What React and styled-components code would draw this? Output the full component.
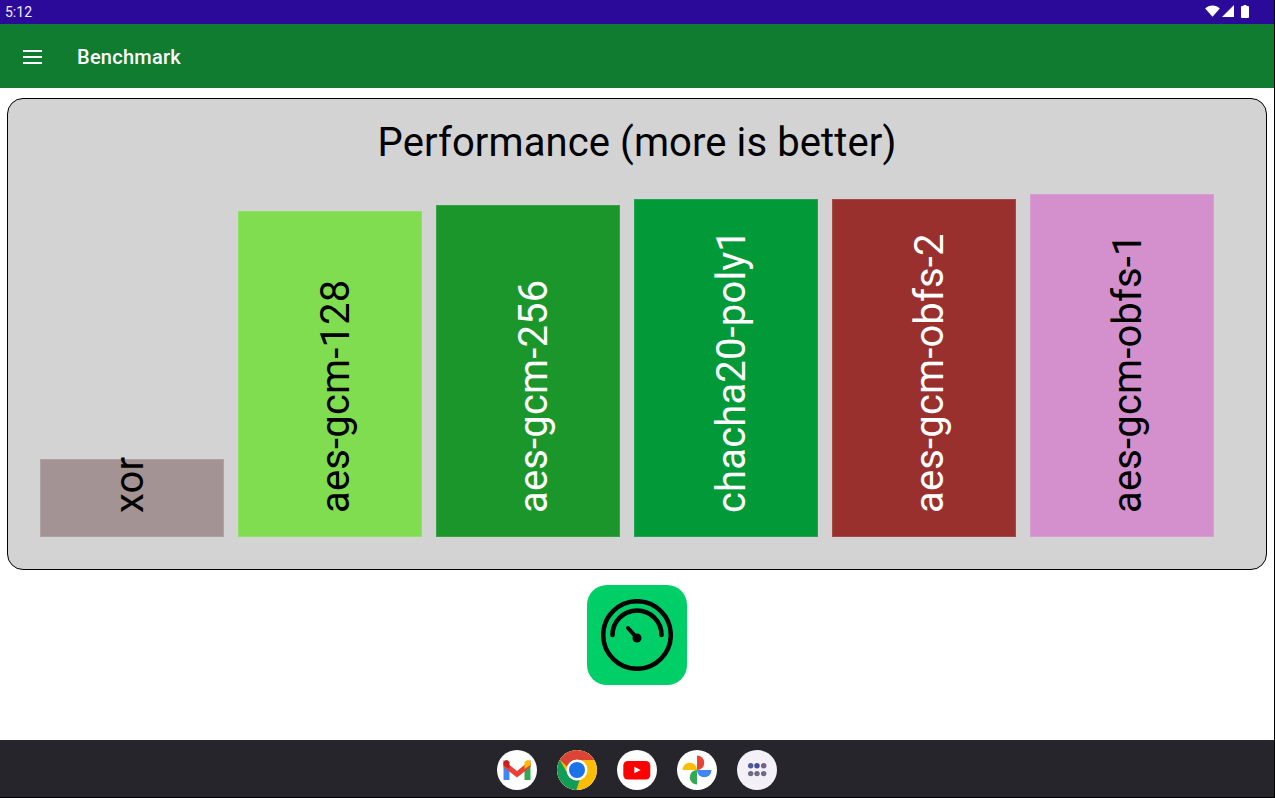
import React from "react";
import styled, { createGlobalStyle } from "styled-components";

const Global = createGlobalStyle`
  html, body { margin: 0; padding: 0; background: #000; height: 100%; overflow: hidden; }
  body { font-family: Roboto, "Liberation Sans", sans-serif; }
`;

const Screen = styled.div`
  width: 1274px;
  height: 797px;
  display: flex;
  flex-direction: column;
  background: #fff;
  overflow: hidden;
`;
const StatusBar = styled.div`
  height: 24px;
  flex: none;
  background: #2b0a9a;
  color: #f1eefb;
  display: flex;
  align-items: center;
  justify-content: space-between;
  padding: 0 25px 0 5px;
  font-size: 14px;
  line-height: 24px;
`;
const StatusIcons = styled.div`
  display: flex;
  align-items: center;
  padding-bottom: 2px;
`;
const Wifi = styled.svg`
  margin-right: 2px;
`;
const Cell = styled.svg`
  margin-right: 7px;
`;
const AppBar = styled.header`
  height: 64px;
  flex: none;
  background: #107c2f;
  color: #fff;
  display: flex;
  align-items: center;
  gap: 34px;
  padding: 2px 0 0 23px;
  box-sizing: border-box;
  font-size: 20px;
  font-weight: 500;
  letter-spacing: 0.25px;
`;
const Main = styled.main`
  flex: 1;
  display: flex;
  flex-direction: column;
  align-items: center;
  padding: 10px 7px 0;
`;
const Card = styled.section`
  box-sizing: border-box;
  width: 100%;
  height: 472px;
  background: #d3d3d3;
  border: 1px solid #000;
  border-radius: 16px;
  padding: 20px 32px 32px;
  display: flex;
  flex-direction: column;
  align-items: center;
`;
const Title = styled.h1`
  margin: 0;
  font-size: 40px;
  font-weight: 400;
  line-height: 47px;
  letter-spacing: 0.1px;
  color: #000;
`;
const Chart = styled.div`
  flex: 1;
  align-self: stretch;
  display: flex;
  align-items: flex-end;
  gap: 14px;
`;
const Bar = styled.div`
  flex: none;
  width: 184px;
  height: ${(p) => p.$h}px;
  background: ${(p) => p.$bg};
  color: ${(p) => p.$fg};
  box-shadow: inset 0 0 0 1px rgba(255, 255, 255, 0.12);
  display: flex;
  justify-content: flex-start;
  align-items: center;
  writing-mode: vertical-rl;
  transform: rotate(180deg);
`;
const BarLabel = styled.span`
  font-size: 40px;
  line-height: 47px;
  letter-spacing: 0.15px;
  white-space: nowrap;
  padding-top: 23.5px;
  margin-right: ${(p) => p.$nudge * 2}px;
`;
const RunButton = styled.button`
  width: 100px;
  height: 100px;
  margin-top: 15px;
  flex: none;
  border: 0;
  padding: 0;
  border-radius: 20px;
  background: #00cf68;
  display: flex;
  align-items: center;
  justify-content: center;
`;
const NavBar = styled.nav`
  height: 57px;
  flex: none;
  background: #25252b;
  display: flex;
  justify-content: center;
  gap: 20px;
  padding: 10px 0 0;
  box-sizing: border-box;
`;
const Dock = styled.div`
  width: 40px;
  height: 40px;
  border-radius: 50%;
  background: ${(p) => p.$bg || "#fff"};
  overflow: hidden;
`;

const bars = [
  { name: "xor", h: 78, bg: "#a49395", fg: "#000", nudge: -3 },
  { name: "aes-gcm-128", h: 326, bg: "#80dd50", fg: "#000", nudge: 5.5 },
  { name: "aes-gcm-256", h: 332, bg: "#1a962a", fg: "#fff", nudge: 5.5 },
  { name: "chacha20-poly1", h: 338, bg: "#029a38", fg: "#fff", nudge: 5.5 },
  { name: "aes-gcm-obfs-2", h: 338, bg: "#9a302e", fg: "#fff", nudge: 5.5 },
  { name: "aes-gcm-obfs-1", h: 343, bg: "#d490cd", fg: "#000", nudge: 5.5 },
];

const Menu = () => (
  <svg width="20" height="14" viewBox="0 0 20 14" fill="#fff">
    <rect x="0" y="0" width="19" height="2" />
    <rect x="0" y="6" width="19" height="2" />
    <rect x="0" y="12" width="19" height="2" />
  </svg>
);

const WifiIcon = () => (
  <Wifi width="15" height="12" viewBox="0 0 16 12">
    <path d="M0.2 3.2C2.3 1.200 5 0 8 0s5.700 1.200 7.800 3.200L8 12z" fill="#fff" />
  </Wifi>
);
const CellIcon = () => (
  <Cell width="12" height="12" viewBox="0 0 12 12">
    <path d="M12 0v12H0z" fill="#fff" />
  </Cell>
);
const Battery = () => (
  <svg width="8" height="13" viewBox="0 0 8 13">
    <path d="M2.500 0h3v1H7a1 1 0 0 1 1 1v10a1 1 0 0 1-1 1H1a1 1 0 0 1-1-1V2a1 1 0 0 1 1-1h1.500z" fill="#fff" />
  </svg>
);

const Gauge = () => (
  <svg width="72" height="72" viewBox="0 0 72 72" fill="none" stroke="#000">
    <circle cx="36" cy="36" r="33.800" strokeWidth="4.500" />
    <path d="M11.500 36A24.500 24.500 0 0 1 60.500 36" strokeWidth="4.500" strokeLinecap="round" />
    <path d="M27 29l9 10" strokeWidth="4" strokeLinecap="round" />
    <circle cx="36" cy="39" r="4.500" fill="#000" stroke="none" />
  </svg>
);

const Gmail = () => (
  <svg width="40" height="40" viewBox="0 0 40 40">
    <path d="M6.500 13v17h6V18z" fill="#4285f4" />
    <path d="M27.500 18v12h6V13z" fill="#34a853" />
    <path d="M6.500 10 20 21 33.500 10v7L20 27.500 6.500 17z" fill="#ea4335" />
    <path d="M6.500 12a3 3 0 0 1 4.500-1.500L12.500 12v7l-6-4z" fill="#c5221f" />
    <path d="M27.500 12l2-1.500a3 3 0 0 1 4 1.500v3l-6 4z" fill="#fbbc04" />
  </svg>
);
const Chrome = () => (
  <svg width="40" height="40" viewBox="0 0 40 40">
    <circle cx="20" cy="20" r="20" fill="#fbbc04" />
    <path d="M20 0a20 20 0 0 1 17.300 10H20a10 10 0 0 0-9.500 6.900L2.800 9.800A20 20 0 0 1 20 0z" fill="#db4437" />
    <path d="M2.800 9.800 11.300 25l8 15A20 20 0 0 1 2.800 9.800z" fill="#0f9d58" />
    <path d="M11.300 25a10 10 0 0 0 11.500 4.600L19.300 40a20 20 0 0 1-2-.100z" fill="#0f9d58" />
    <circle cx="20" cy="20" r="10.500" fill="#fff" />
    <circle cx="20" cy="20" r="8" fill="#1a73e8" />
  </svg>
);
const YouTube = () => (
  <svg width="40" height="40" viewBox="0 0 40 40">
    <rect x="6.300" y="11" width="27" height="18.500" rx="4.500" fill="#f00" />
    <path d="M17.300 16.700v6.600l6.400-3.300z" fill="#fff" />
  </svg>
);
const Photos = () => (
  <svg width="40" height="40" viewBox="0 0 40 40">
    <path d="M20 5.500a7.250 7.250 0 0 1 0 14.500z" fill="#ea4335" />
    <path d="M5.500 20a7.250 7.250 0 0 1 14.500 0z" fill="#fbbc04" />
    <path d="M20 20v14.500a7.250 7.250 0 0 1 0-14.500z" fill="#34a853" />
    <path d="M20 20h14.500a7.250 7.250 0 0 1-14.500 0z" fill="#4285f4" />
  </svg>
);
const Apps = () => (
  <svg width="40" height="40" viewBox="0 0 40 40">
    {[13.700, 20, 26.700].map((x, i) => (
      <React.Fragment key={x}>
        <circle cx={x} cy="15.800" r="2.700" fill={["#4d5b91", "#3f5096", "#75608a"][i]} />
        <circle cx={x} cy="23.600" r="2.700" fill="#6d6c85" />
      </React.Fragment>
    ))}
  </svg>
);

export default function App() {
  return (
    <Screen>
      <Global />
      <StatusBar>
        <span>5:12</span>
        <StatusIcons>
          <WifiIcon />
          <CellIcon />
          <Battery />
        </StatusIcons>
      </StatusBar>
      <AppBar>
        <Menu />
        <span>Benchmark</span>
      </AppBar>
      <Main>
        <Card>
          <Title>Performance (more is better)</Title>
          <Chart>
            {bars.map((b) => (
              <Bar key={b.name} $h={b.h} $bg={b.bg} $fg={b.fg}>
                <BarLabel $nudge={b.nudge}>{b.name}</BarLabel>
              </Bar>
            ))}
          </Chart>
        </Card>
        <RunButton aria-label="Run benchmark">
          <Gauge />
        </RunButton>
      </Main>
      <NavBar>
        <Dock><Gmail /></Dock>
        <Dock><Chrome /></Dock>
        <Dock><YouTube /></Dock>
        <Dock><Photos /></Dock>
        <Dock $bg="#f3f0f8"><Apps /></Dock>
      </NavBar>
    </Screen>
  );
}
